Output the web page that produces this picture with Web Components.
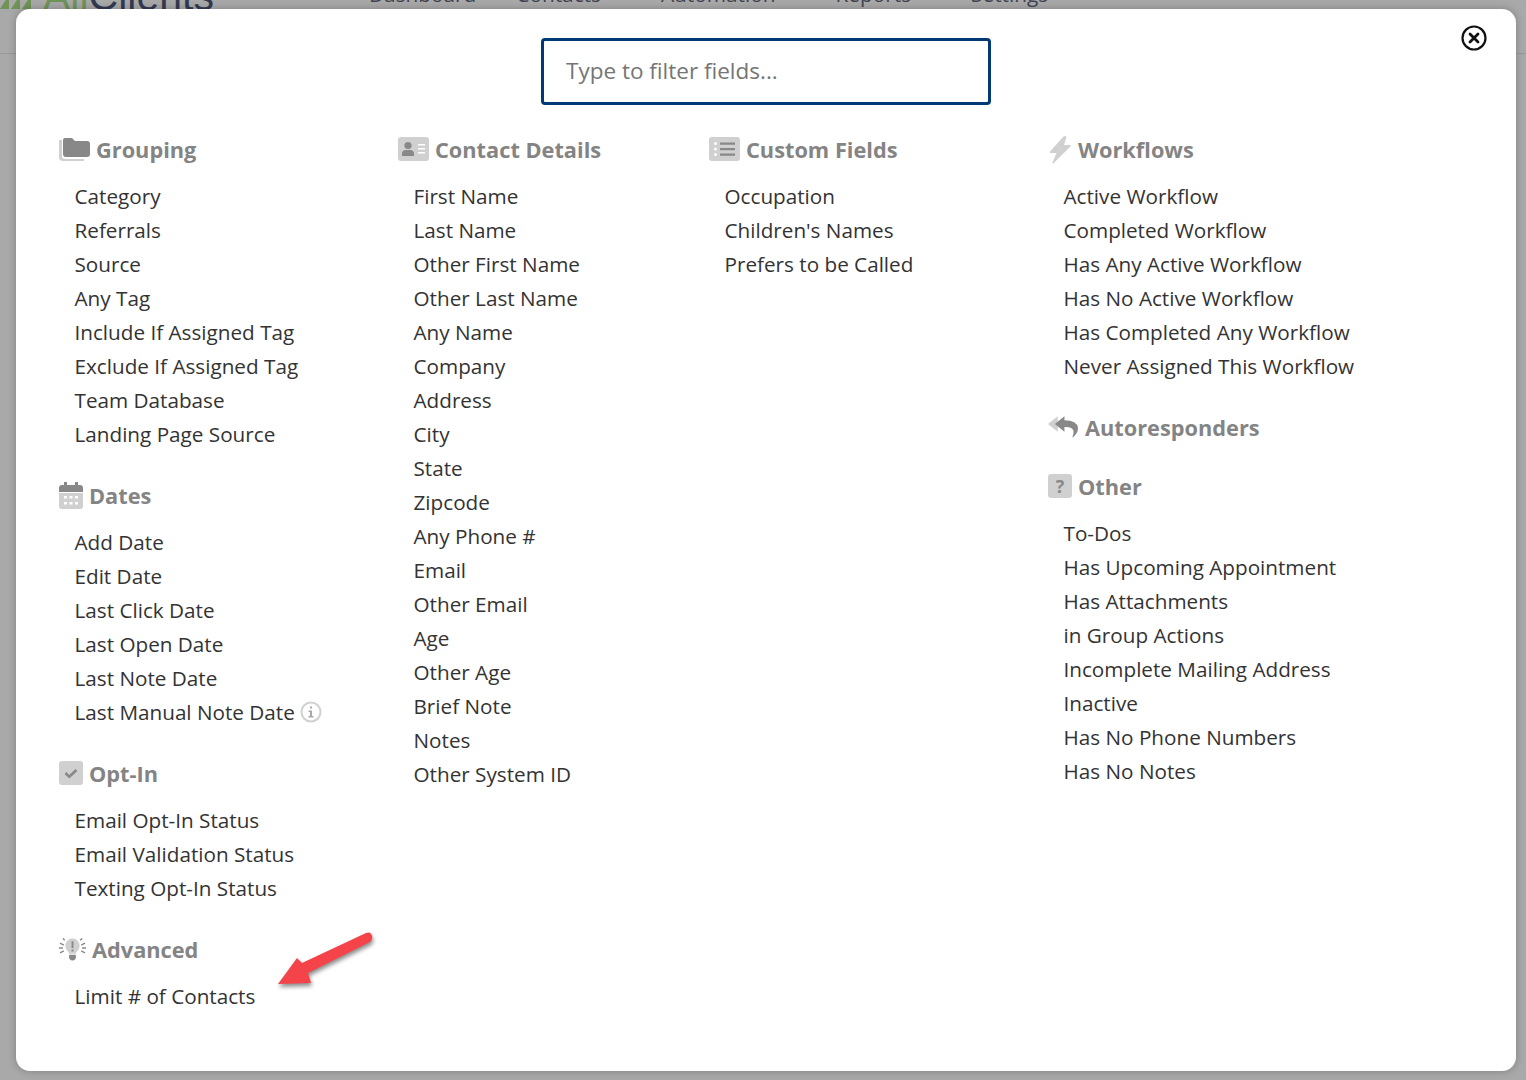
<!DOCTYPE html>
<html lang="en">
  <head>
    <meta charset="UTF-8" />
    <title>Filter fields</title>
    <style>
      html,
      body {
        margin: 0;
        height: 1080px;
        overflow: hidden;
        background: #a9a9a9;
        font-family: 'Open Sans', 'Liberation Sans', sans-serif;
      }
    </style>
    <script>
      const ICONS = {
        folder:
          '<svg width="31" height="26" viewBox="0 0 31 26"><path d="M0 4v17a4 4 0 0 0 4 4h21v-2H6a3 3 0 0 1-3-3V4z" fill="#d0d0d0"/><path d="M4 4a2 2 0 0 1 2-2h7l3 3h12a3 3 0 0 1 3 3v10a3 3 0 0 1-3 3H7a3 3 0 0 1-3-3z" fill="#888"/></svg>',
        card:
          '<svg width="31" height="24" viewBox="0 0 31 24"><rect width="31" height="24" rx="3" fill="#d0d0d0"/><circle cx="10" cy="8.5" r="3.6" fill="#888"/><path d="M4 19v-2a4 4 0 0 1 4-4h4a4 4 0 0 1 4 4v2z" fill="#888"/><path d="M20 7h7v1.6h-7zM20 11h7v1.6h-7zM20 15h7v1.6h-7z" fill="#fff"/></svg>',
        list:
          '<svg width="31" height="24" viewBox="0 0 31 24"><rect width="31" height="24" rx="3" fill="#d0d0d0"/><path d="M11 5.5h15v2.2H11zM11 11h15v2.2H11zM11 16.500h15v2.200H11z" fill="#888"/><circle cx="6.500" cy="6.600" r="1.500" fill="#fff"/><circle cx="6.500" cy="12" r="1.500" fill="#fff"/><circle cx="6.500" cy="17.500" r="1.500" fill="#fff"/></svg>',
        bolt:
          '<svg width="24" height="28" viewBox="0 0 23 28" style="margin-top:2px"><path d="M15 .5 1.500 15.500q-.8 1.200.7 1.500H8L4 26.500q-.3 1.500 1 .8L22 10.500q.8-1.300-.7-1.500H15.500L18 1q-.5-1.500-3-.5z" fill="#d0d0d0"/></svg>',
        reply:
          '<svg width="31" height="28" viewBox="0 0 32 28"><path d="M10 3 0 11l10 8z" fill="#d0d0d0"/><path d="M17 3 7 11l10 8v-5q7-.5 9 3 1 3-1 8 6-4 6-10-1-8-14-8z" fill="#888"/></svg>',
        question:
          '<svg width="24" height="24" viewBox="0 0 24 24"><rect width="24" height="24" rx="3" fill="#d0d0d0"/><text x="12" y="18.500" text-anchor="middle" font-family="Open Sans" font-weight="700" font-size="18" fill="#888">?</text></svg>',
        calendar:
          '<svg width="24" height="27" viewBox="0 0 24 27"><path d="M0 11h24v13a3 3 0 0 1-3 3H3a3 3 0 0 1-3-3z" fill="#d0d0d0"/><path d="M3 3h2V0h3v3h8V0h3v3h2a3 3 0 0 1 3 3v4H0V6a3 3 0 0 1 3-3z" fill="#888"/><path d="M5 14h3v2.500H5zM10.500 14h3v2.500h-3zM16 14h3v2.500h-3zM5 20h3v2.500H5zM10.500 20h3v2.500h-3zM16 20h3v2.500h-3z" fill="#fff"/></svg>',
        check:
          '<svg width="24" height="24" viewBox="0 0 24 24"><rect width="24" height="24" rx="3" fill="#d0d0d0"/><path d="m6.500 12 3.800 3.800L17.500 9" fill="none" stroke="#888" stroke-width="2.600"/></svg>',
        bulb:
          '<svg width="27" height="26" viewBox="0 0 28 26"><path d="M14 2a7.500 7.500 0 0 0-5 13q1.500 1.500 1.500 3h7q0-1.500 1.500-3a7.500 7.500 0 0 0-5-13z" fill="#d0d0d0"/><path d="M10.500 19h7v2.500q0 3-3.500 3.500-3.500-.5-3.500-3.500z" fill="#888"/><path d="M13 5h2v7h-2zM13 13.500h2v2h-2z" fill="#888"/><path d="M1 7l4 2M0 12h4M1 17l4-2M27 7l-4 2M28 12h-4M27 17l-4-2M4 2l2 2M24 2l-2 2" stroke="#888" stroke-width="1.500"/></svg>'
      }

      class AppBackdrop extends HTMLElement {
        connectedCallback() {
          this.attachShadow({ mode: 'open' }).innerHTML = `
            <style>
              :host { display: block; height: 54px; box-sizing: border-box; border-bottom: 1px solid #999; overflow: hidden; color: #3f4350; }
              .bar { display: flex; align-items: flex-end; height: 9px; }
              .logo { display: flex; align-items: flex-end; width: 369px; font: 500 41px/44px 'Liberation Sans', sans-serif; flex: none; color: #333a52; margin-bottom: -9px; }
              .logo svg { margin: 0 10px 9px 0; flex: none; }
              .logo b { font-weight: 500; color: #6f9456; }
              nav { display: flex; gap: 60px; font-size: 20.8px; line-height: 28px; flex: none; margin-bottom: 1px; }
              nav span:first-child { margin-right: -20px; }
            </style>
            <div class="bar">
              <div class="logo">
                <svg width="33" height="20" viewBox="0 0 33 20"><path d="M0 20 9 6v14zM11 20 20 6v14zM22 20 31 6v14z" fill="#6f9456"/></svg>
                <span><b>All</b>Clients</span>
              </div>
              <nav><span>Dashboard</span><span>Contacts</span><span>Automation</span><span>Reports</span><span>Settings</span></nav>
            </div>`
        }
      }

      class FilterInput extends HTMLElement {
        connectedCallback() {
          this.attachShadow({ mode: 'open' }).innerHTML = `
            <style>
              :host { display: block; width: 450px; margin: 0 auto; }
              input { display: block; width: 100%; height: 67px; box-sizing: border-box; border: 3px solid #003a75; border-radius: 4px; padding: 0 22px 2px; font: 22.5px 'Open Sans', sans-serif; color: #333; outline: none; background: #fff; }
              input::placeholder { color: #757575; opacity: 1; }
            </style>
            <input type="text" placeholder="Type to filter fields..." />`
        }
      }

      class FieldGroup extends HTMLElement {
        connectedCallback() {
          const icon = ICONS[this.getAttribute('icon')] || ''
          this.attachShadow({ mode: 'open' }).innerHTML = `
            <style>
              :host { display: block; margin-bottom: 27px; }
              :host([tight]) { margin-bottom: 25px; }
              h3 { display: flex; align-items: center; gap: 6px; margin: 0; height: 34px; font: 700 21.75px/34px 'Open Sans', sans-serif; color: #848484; }
              h3 span { margin-top: 2px; }
              svg { display: block; flex: none; }
              .items { display: flex; flex-direction: column; padding: 13px 0 0 15.5px; }
              :host([empty]) .items { display: none; }
            </style>
            <h3>${icon}<span>${this.getAttribute('label')}</span></h3>
            <div class="items"><slot></slot></div>`
        }
      }

      class FieldItem extends HTMLElement {
        connectedCallback() {
          this.attachShadow({ mode: 'open' }).innerHTML = `
            <style>
              :host { display: flex; align-items: center; gap: 5px; height: 34px; font: 20.7px/34px 'Open Sans', sans-serif; color: #333; white-space: nowrap; }
              svg { flex: none; }
            </style>
            <span><slot></slot></span>
            ${
              this.hasAttribute('info')
                ? '<svg width="22" height="22" viewBox="0 0 22 22"><circle cx="11" cy="11" r="9.500" fill="none" stroke="#d0d0d0" stroke-width="2"/><path d="M10 5.500h2v2h-2zM8.500 9.500H12V15h1.500v1.500h-5V15H10v-4H8.500z" fill="#a8a8a8"/></svg>'
                : ''
            }`
        }
      }

      class FieldColumn extends HTMLElement {
        connectedCallback() {
          this.attachShadow({ mode: 'open' }).innerHTML = `
            <style>
              :host { display: block; flex: none; width: var(--w, auto); }
            </style>
            <slot></slot>`
        }
      }

      class CloseButton extends HTMLElement {
        connectedCallback() {
          this.attachShadow({ mode: 'open' }).innerHTML = `
            <style>
              :host { position: absolute; top: 16px; right: 29px; display: block; width: 26px; height: 26px; }
              svg { display: block; }
            </style>
            <svg width="26" height="26" viewBox="0 0 26 26"><circle cx="13" cy="13" r="11.500" fill="none" stroke="#111" stroke-width="2.200"/><path d="m9 9 8 8M17 9l-8 8" stroke="#111" stroke-width="2.800" stroke-linecap="round"/></svg>`
        }
      }

      class FieldsModal extends HTMLElement {
        connectedCallback() {
          this.attachShadow({ mode: 'open' }).innerHTML = `
            <style>
              :host { position: absolute; left: 16px; top: 9px; width: 1500px; height: 1062px; box-sizing: border-box; padding: 29px 43px 0; background: #fff; border-radius: 14px; box-shadow: 0 0 8px rgba(0, 0, 0, 0.25); }
              .cols { display: flex; margin-top: 27px; }
            </style>
            <close-button></close-button>
            <filter-input></filter-input>
            <div class="cols"><slot></slot></div>
            <slot name="over"></slot>`
        }
      }

      class CalloutArrow extends HTMLElement {
        connectedCallback() {
          this.attachShadow({ mode: 'open' }).innerHTML = `
            <style>
              :host { position: absolute; left: 262px; top: 922px; display: block; width: 100px; height: 60px; }
              svg { display: block; overflow: visible; filter: drop-shadow(1px 3px 2px rgba(0, 0, 0, 0.45)); }
            </style>
            <svg width="100" height="60" viewBox="0 0 100 60"><path d="M0 53 19 27l5 5L88 2q5-2 6 3 1 3-2 6L30 42l3 10z" fill="#f44349"/></svg>`
        }
      }

      customElements.define('app-backdrop', AppBackdrop)
      customElements.define('filter-input', FilterInput)
      customElements.define('field-group', FieldGroup)
      customElements.define('field-item', FieldItem)
      customElements.define('field-column', FieldColumn)
      customElements.define('close-button', CloseButton)
      customElements.define('fields-modal', FieldsModal)
      customElements.define('callout-arrow', CalloutArrow)
    </script>
  </head>
  <body>
    <app-backdrop></app-backdrop>
    <fields-modal>
      <field-column style="--w: 339px">
        <field-group icon="folder" label="Grouping">
          <field-item>Category</field-item>
          <field-item>Referrals</field-item>
          <field-item>Source</field-item>
          <field-item>Any Tag</field-item>
          <field-item>Include If Assigned Tag</field-item>
          <field-item>Exclude If Assigned Tag</field-item>
          <field-item>Team Database</field-item>
          <field-item>Landing Page Source</field-item>
        </field-group>
        <field-group icon="calendar" label="Dates">
          <field-item>Add Date</field-item>
          <field-item>Edit Date</field-item>
          <field-item>Last Click Date</field-item>
          <field-item>Last Open Date</field-item>
          <field-item>Last Note Date</field-item>
          <field-item info>Last Manual Note Date</field-item>
        </field-group>
        <field-group icon="check" label="Opt-In">
          <field-item>Email Opt-In Status</field-item>
          <field-item>Email Validation Status</field-item>
          <field-item>Texting Opt-In Status</field-item>
        </field-group>
        <field-group icon="bulb" label="Advanced">
          <field-item>Limit # of Contacts</field-item>
        </field-group>
      </field-column>
      <field-column style="--w: 311px">
        <field-group icon="card" label="Contact Details">
          <field-item>First Name</field-item>
          <field-item>Last Name</field-item>
          <field-item>Other First Name</field-item>
          <field-item>Other Last Name</field-item>
          <field-item>Any Name</field-item>
          <field-item>Company</field-item>
          <field-item>Address</field-item>
          <field-item>City</field-item>
          <field-item>State</field-item>
          <field-item>Zipcode</field-item>
          <field-item>Any Phone #</field-item>
          <field-item>Email</field-item>
          <field-item>Other Email</field-item>
          <field-item>Age</field-item>
          <field-item>Other Age</field-item>
          <field-item>Brief Note</field-item>
          <field-item>Notes</field-item>
          <field-item>Other System ID</field-item>
        </field-group>
      </field-column>
      <field-column style="--w: 339px">
        <field-group icon="list" label="Custom Fields">
          <field-item>Occupation</field-item>
          <field-item>Children's Names</field-item>
          <field-item>Prefers to be Called</field-item>
        </field-group>
      </field-column>
      <field-column>
        <field-group icon="bolt" label="Workflows">
          <field-item>Active Workflow</field-item>
          <field-item>Completed Workflow</field-item>
          <field-item>Has Any Active Workflow</field-item>
          <field-item>Has No Active Workflow</field-item>
          <field-item>Has Completed Any Workflow</field-item>
          <field-item>Never Assigned This Workflow</field-item>
        </field-group>
        <field-group icon="reply" label="Autoresponders" empty tight></field-group>
        <field-group icon="question" label="Other">
          <field-item>To-Dos</field-item>
          <field-item>Has Upcoming Appointment</field-item>
          <field-item>Has Attachments</field-item>
          <field-item>in Group Actions</field-item>
          <field-item>Incomplete Mailing Address</field-item>
          <field-item>Inactive</field-item>
          <field-item>Has No Phone Numbers</field-item>
          <field-item>Has No Notes</field-item>
        </field-group>
      </field-column>
      <callout-arrow slot="over"></callout-arrow>
    </fields-modal>
  </body>
</html>
